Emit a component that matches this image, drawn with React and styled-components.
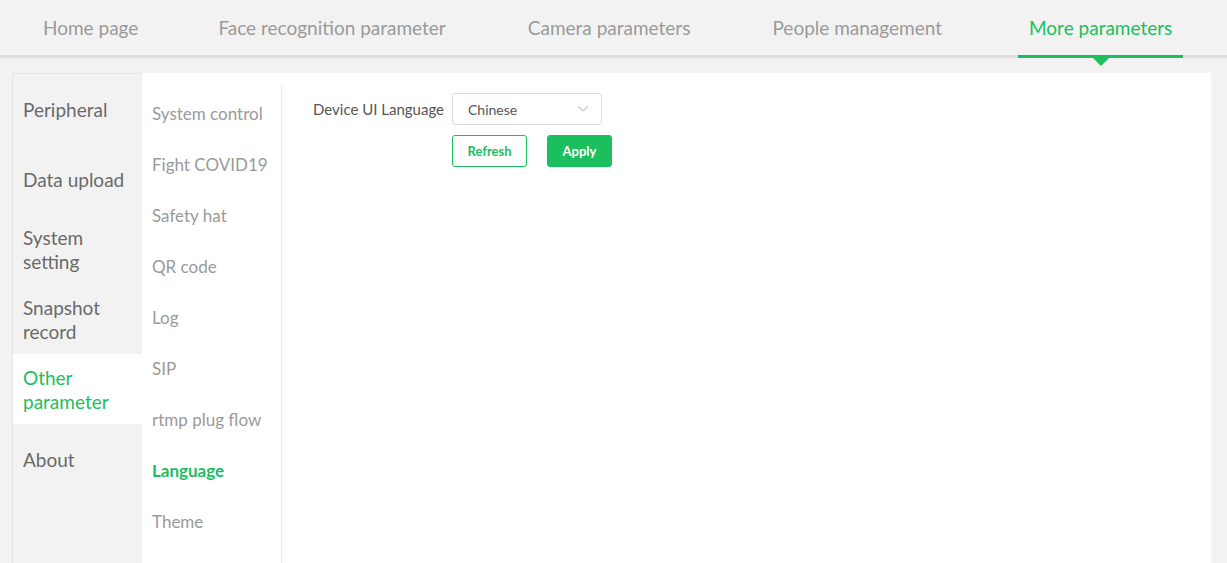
import React, { useState } from "react";
import styled, { createGlobalStyle } from "styled-components";

const GREEN = "#1bbf5e";

const GlobalStyle = createGlobalStyle`
  html, body {
    margin: 0;
    padding: 0;
    background: #f2f2f2;
    font-family: "Lato", "Noto Sans", sans-serif;
  }
  * { box-sizing: border-box; }
`;

const tabs = [
  "Home page",
  "Face recognition parameter",
  "Camera parameters",
  "People management",
  "More parameters",
];

const groups = [
  "Peripheral",
  "Data upload",
  "System setting",
  "Snapshot record",
  "Other parameter",
  "About",
];

const subItems = [
  "System control",
  "Fight COVID19",
  "Safety hat",
  "QR code",
  "Log",
  "SIP",
  "rtmp plug flow",
  "Language",
  "Theme",
];

export default function App() {
  const [tab, setTab] = useState(4);
  const [group, setGroup] = useState(4);
  const [sub, setSub] = useState(7);

  return (
    <Page>
      <GlobalStyle />
      <TopBar>
        {tabs.map((t, i) => (
          <Tab key={t} $active={i === tab} onClick={() => setTab(i)}>
            {t}
          </Tab>
        ))}
      </TopBar>
      <Body>
        <Card>
          <GroupNav>
            {groups.map((g, i) => (
              <GroupItem
                key={g}
                $active={i === group}
                onClick={() => setGroup(i)}
              >
                {g}
              </GroupItem>
            ))}
          </GroupNav>
          <SubNav>
            {subItems.map((s, i) => (
              <SubItem key={s} $active={i === sub} onClick={() => setSub(i)}>
                {s}
              </SubItem>
            ))}
          </SubNav>
          <Content>
            <FormRow>
              <Label>Device UI Language</Label>
              <Select>
                <span>Chinese</span>
                <svg width="12" height="8" viewBox="0 0 12 8">
                  <path
                    d="M1 1.5 L6 6 L11 1.5"
                    fill="none"
                    stroke="#c8c8c8"
                    strokeWidth="1.2"
                  />
                </svg>
              </Select>
            </FormRow>
            <Actions>
              <Button $width={75}>Refresh</Button>
              <Button $width={65} $primary>
                Apply
              </Button>
            </Actions>
          </Content>
        </Card>
      </Body>
    </Page>
  );
}

const Page = styled.div`
  height: 563px;
  display: flex;
  flex-direction: column;
  overflow: hidden;
`;

const TopBar = styled.div`
  height: 58px;
  flex-shrink: 0;
  display: flex;
  align-items: stretch;
  gap: 60px;
  padding-left: 32px;
  border-bottom: 3px solid #dedede;
  background: #f2f2f2;
`;

const Tab = styled.div`
  position: relative;
  display: flex;
  align-items: center;
  padding: 0 11px;
  margin-bottom: -3px;
  font-size: 19px;
  color: ${(p) => (p.$active ? GREEN : "#9a9a9a")};
  border-bottom: 3px solid ${(p) => (p.$active ? GREEN : "transparent")};
  cursor: pointer;

  &:nth-child(2) {
    margin-left: -2px;
  }
  &:last-child {
    margin-left: 5px;
  }

  &::after {
    content: "";
    display: ${(p) => (p.$active ? "block" : "none")};
    position: absolute;
    left: 50%;
    bottom: -11px;
    margin-left: -8px;
    border-left: 8px solid transparent;
    border-right: 8px solid transparent;
    border-top: 8px solid ${GREEN};
  }
`;

const Body = styled.div`
  flex: 1;
  display: flex;
  padding: 15px 16px 0 12px;
`;

const Card = styled.div`
  flex: 1;
  display: flex;
  background: #fff;
`;

const GroupNav = styled.div`
  width: 130px;
  flex-shrink: 0;
  background: #f2f2f2;
  border-left: 1px solid #e4e4e4;
  border-top: 1px solid #e4e4e4;
  display: flex;
  flex-direction: column;
`;

const GroupItem = styled.div`
  height: 70px;
  display: flex;
  align-items: center;
  padding: 2px 10px 0 10px;
  font-size: 19px;
  line-height: 24px;
  color: ${(p) => (p.$active ? GREEN : "#6a6a6a")};
  background: ${(p) => (p.$active ? "#fff" : "transparent")};
  cursor: pointer;
`;

const SubNav = styled.div`
  width: 140px;
  flex-shrink: 0;
  margin-top: 10px;
  padding: 20px 0 0 10px;
  border-right: 1px solid #ececec;
  display: flex;
  flex-direction: column;
`;

const SubItem = styled.div`
  height: 51px;
  font-size: 17px;
  line-height: 22px;
  color: ${(p) => (p.$active ? GREEN : "#9a9a9a")};
  font-weight: ${(p) => (p.$active ? 700 : 400)};
  cursor: pointer;
`;

const Content = styled.div`
  flex: 1;
  padding: 20px 0 0 31px;
`;

const FormRow = styled.div`
  display: flex;
  align-items: center;
  gap: 8px;
`;

const Label = styled.div`
  font-size: 15px;
  color: #555;
`;

const Select = styled.div`
  width: 150px;
  height: 32px;
  border: 1px solid #dcdcdc;
  border-radius: 3px;
  display: flex;
  align-items: center;
  justify-content: space-between;
  padding: 0 12px 0 15px;
  font-size: 14px;
  color: #555;
`;

const Actions = styled.div`
  display: flex;
  gap: 20px;
  margin: 10px 0 0 139px;
`;

const Button = styled.button`
  height: 32px;
  width: ${(p) => p.$width}px;
  padding: 0;
  border-radius: 3px;
  border: 1px solid ${GREEN};
  background: ${(p) => (p.$primary ? GREEN : "#fff")};
  color: ${(p) => (p.$primary ? "#fff" : GREEN)};
  font-family: inherit;
  font-size: 13px;
  font-weight: 700;
  cursor: pointer;
`;
